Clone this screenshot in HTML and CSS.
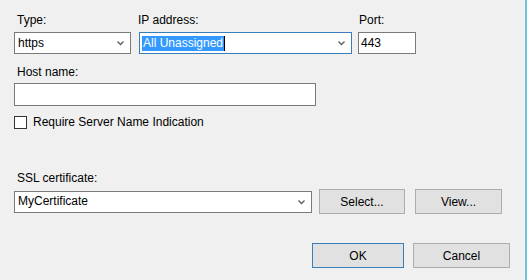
FILE: index.html
```html
<!DOCTYPE html>
<html lang="en">
<head>
    <meta charset="UTF-8">
    <title>Edit Site Binding</title>
    <link rel="stylesheet" href="styles.css">
</head>
<body>
    <div class="dialog">
        <!-- Type / IP / Port -->
        <div class="row top-row">
            <div class="field type-field">
                <label>Type:</label>
                <div class="combo">
                    <span class="value">https</span>
                    <svg class="chevron" width="9" height="6" viewBox="0 0 9 6"><path d="M1.5 1.5 L4.5 4.5 L7.5 1.5" fill="none" stroke="#606060" stroke-width="1.4"/></svg>
                </div>
            </div>
            <div class="field ip-field">
                <label class="ip-label">IP address:</label>
                <div class="combo focused">
                    <span class="value selected">All Unassigned</span><span class="caret"></span>
                    <svg class="chevron" width="9" height="6" viewBox="0 0 9 6"><path d="M1.5 1.5 L4.5 4.5 L7.5 1.5" fill="none" stroke="#606060" stroke-width="1.4"/></svg>
                </div>
            </div>
            <div class="field port-field">
                <label class="port-label">Port:</label>
                <div class="textbox">443</div>
            </div>
        </div>

        <div class="field host-field">
            <label>Host name:</label>
            <div class="textbox host-box"></div>
        </div>

        <div class="check-row">
            <span class="checkbox"></span>
            <span>Require Server Name Indication</span>
        </div>

        <div class="field ssl-field">
            <label>SSL certificate:</label>
            <div class="row cert-row">
                <div class="combo cert-combo">
                    <span class="value">MyCertificate</span>
                    <svg class="chevron" width="9" height="6" viewBox="0 0 9 6"><path d="M1.5 1.5 L4.5 4.5 L7.5 1.5" fill="none" stroke="#606060" stroke-width="1.4"/></svg>
                </div>
                <button class="btn select-btn">Select...</button>
                <button class="btn view-btn">View...</button>
            </div>
        </div>

        <div class="footer">
            <button class="btn default ok-btn">OK</button>
            <button class="btn cancel-btn">Cancel</button>
        </div>
    </div>
</body>
</html>
```

FILE: styles.css
```css
/* Global Styles */
body {
    margin: 0;
    background-color: #f0f0f0;
    font-family: "Liberation Sans", Arial, sans-serif;
    font-size: 12px;
    color: #000;
}

.dialog {
    width: 527px;
    height: 280px;
    box-sizing: border-box;
    border-right: 2px solid #6fc5df;
    padding: 13px 0 0 14px;
    display: flex;
    flex-direction: column;
}

.row {
    display: flex;
}

.field {
    display: flex;
    flex-direction: column;
}

.field label {
    line-height: 15px;
    padding-left: 3px;
    margin-bottom: 4px;
}

.field .ip-label {
    padding-left: 0;
    margin-left: -1px;
}

.field .port-label {
    padding-left: 1px;
}

/* Combo boxes and text boxes */
.combo,
.textbox {
    height: 22px;
    box-sizing: border-box;
    border: 1px solid #7a7a7a;
    background: #ffffff;
    display: flex;
    align-items: center;
    padding-left: 2px;
}

.combo .value {
    line-height: 15px;
    padding: 0 1px;
}

.combo .chevron {
    margin-left: auto;
    margin-right: 5px;
}

.combo.focused {
    border-color: #3b7db8;
}

.value.selected {
    background: #3399ff;
    color: #ffffff;
}

.caret {
    width: 1px;
    height: 15px;
    background: #000;
}

.type-field {
    width: 117px;
}

.ip-field {
    width: 213px;
    margin-left: 8px;
}

.port-field {
    width: 58px;
    margin-left: 6px;
}

.host-field {
    margin-top: 11px;
}

.host-field label {
    margin-bottom: 3px;
}

.host-box {
    width: 302px;
    height: 23px;
}

/* Checkbox */
.check-row {
    display: flex;
    align-items: center;
    margin-top: 9px;
    line-height: 15px;
}

.checkbox {
    width: 13px;
    height: 13px;
    box-sizing: border-box;
    border: 1px solid #333333;
    background: #ffffff;
    margin-right: 6px;
}

/* Certificate */
.ssl-field {
    margin-top: 41px;
}

.ssl-field label {
    margin-bottom: 3px;
}

.cert-row {
    align-items: center;
}

.cert-combo {
    width: 298px;
}

/* Buttons */
.btn {
    height: 25px;
    box-sizing: border-box;
    border: 1px solid #adadad;
    background: #e1e1e1;
    font-family: "Liberation Sans", Arial, sans-serif;
    font-size: 12px;
    color: #000;
    padding: 0;
}

.btn.default {
    border-color: #3b7db8;
}

.select-btn {
    width: 86px;
    margin-left: 7px;
}

.view-btn {
    width: 87px;
    margin-left: 10px;
}

.footer {
    display: flex;
    margin-top: 29px;
    padding-left: 298px;
}

.ok-btn {
    width: 92px;
}

.cancel-btn {
    width: 97px;
    margin-left: 9px;
}
```
